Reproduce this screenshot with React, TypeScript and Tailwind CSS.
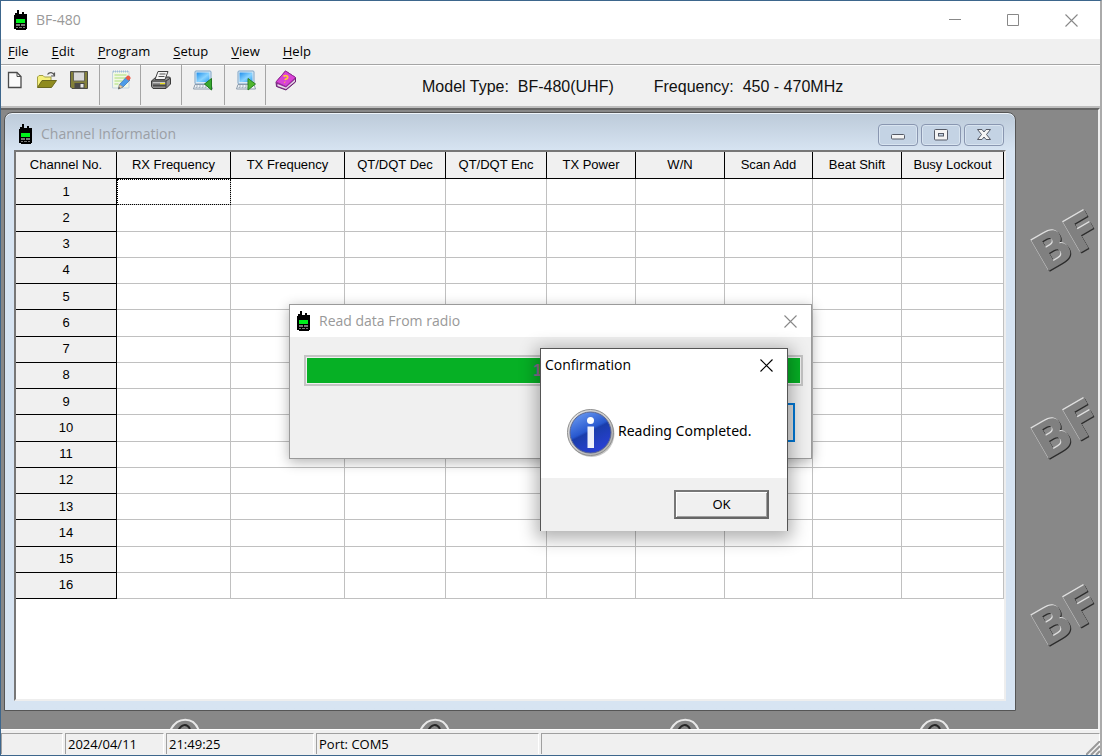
import { ReactNode, useState } from 'react';

const menus = ['File', 'Edit', 'Program', 'Setup', 'View', 'Help'];

const columns = [
  { label: 'RX Frequency', width: 'w-[114px]' },
  { label: 'TX Frequency', width: 'w-[114px]' },
  { label: 'QT/DQT Dec', width: 'w-[101px]' },
  { label: 'QT/DQT Enc', width: 'w-[101px]' },
  { label: 'TX Power', width: 'w-[89px]' },
  { label: 'W/N', width: 'w-[89px]' },
  { label: 'Scan Add', width: 'w-[88px]' },
  { label: 'Beat Shift', width: 'w-[89px]' },
  { label: 'Busy Lockout', width: 'w-[102px]' },
];

const channels = Array.from({ length: 16 }, (_, i) => i + 1);

function RadioIcon() {
  return (
    <svg width="16" height="20" viewBox="0 0 16 20" shapeRendering="crispEdges" className="shrink-0" aria-hidden="true">
      <path d="M4 0h2v4h3V2h2v2h3v15h-1v1H3v-1H1V5h1V3h2z" fill="#000" />
      <path d="M3 9h9v4H3z" fill="#00f01c" />
      <path d="M3 14h4v2H3zM8 14h4v2H8zM3 17h2v1H3zM6 17h3v1H6zM10 17h2v1h-2z" fill="#777" />
    </svg>
  );
}

function NewIcon() {
  return (
    <svg width="16" height="18" viewBox="0 0 16 18" aria-hidden="true">
      <path d="M1.5 1.5h8.500l4 4v11h-12.500z" fill="#fafafa" stroke="#4b4b4b" strokeWidth="1.300" />
      <path d="M10 1.500v4h4" fill="none" stroke="#4b4b4b" />
    </svg>
  );
}

function OpenIcon() {
  return (
    <svg width="22" height="18" viewBox="0 0 22 18" className="shrink-0" aria-hidden="true">
      <path d="M1.500 16V6l1.500-1.500h4L8.500 6h6.500v3.500" fill="#f5f07c" stroke="#a29f45" />
      <path d="M1.500 16.500 6 9.500h14.500L15.500 16.500z" fill="#8f8b1e" stroke="#6a681f" />
      <path d="M11.500 3.500c2-3 5.500-2.500 7 1M18.500 1.500v3.500h-3.500" fill="none" stroke="#555" strokeWidth="1.200" />
    </svg>
  );
}

function SaveIcon() {
  return (
    <svg width="20" height="20" viewBox="0 0 20 20" aria-hidden="true">
      <path d="M1.500 1.500h17v17H3l-1.500-1.500z" fill="#83803a" stroke="#4b4b46" />
      <path d="M4.500 2h11v9h-11z" fill="#d9d9d9" stroke="#66665a" />
      <path d="M5.500 13h10v5.500h-10z" fill="#4a4a4a" />
      <path d="M11.500 14h3v3.500h-3z" fill="#e8e8e8" />
    </svg>
  );
}

function EditIcon() {
  return (
    <svg width="20" height="20" viewBox="0 0 20 20" aria-hidden="true">
      <path d="M1.500 1.500h16.500v16.500h-16.500z" fill="#f1f8e6" stroke="#c3d3e0" />
      <path d="M2 1.500h16" stroke="#9fbdd8" strokeWidth="2" strokeDasharray="1 1" />
      <path d="M3.500 5h12M3.500 8h11M3.500 11h8M3.500 14h4" stroke="#c2e69c" strokeWidth="1.500" />
      <path d="M7.500 19l1-4.500 7-7.500 3.500 3L12 17z" fill="#4b9be8" stroke="#3f78b8" strokeWidth=".8" />
      <path d="M14.500 8l2-2.500c1.500-.5 3.500 1.500 3 3l-2 2.300z" fill="#ee5a45" />
      <path d="M7.500 19l1-4.500L12 17z" fill="#f2cf9c" stroke="#987" strokeWidth=".6" />
      <path d="M7.500 19l.4-2 1.300 1z" fill="#333" />
    </svg>
  );
}

function PrintIcon() {
  return (
    <svg width="22" height="20" viewBox="0 0 22 20" aria-hidden="true">
      <path d="M1.500 11 6 7h13.500l1 1.500v5.500L16 18.500H3L1.500 16.500z" fill="#8f8f8f" stroke="#3a3a3a" />
      <path d="M5 9.500 8 1.500h10l-3 8z" fill="#f6f6f6" stroke="#444" />
      <path d="M9.500 4h6M8.500 6.500h6" stroke="#555" />
      <path d="M1.500 11h14.500l4.500-3M16 11v7" fill="none" stroke="#3a3a3a" />
      <path d="M3 15.500h13" stroke="#4b4b4b" strokeWidth="2" />
      <path d="M10 13.500h5" stroke="#ecdf20" strokeWidth="1.500" />
      <path d="M3 12.500h12" stroke="#c6c6c6" />
    </svg>
  );
}

function ComputerIcon({ write = false }: { write?: boolean }) {
  return (
    <svg width="22" height="21" viewBox="0 0 22 21" aria-hidden="true">
      <defs>
        <linearGradient id={write ? 'screenWrite' : 'screenRead'} x1="0" y1="0" x2="1" y2="1">
          <stop offset="0" stopColor="#1f8fec" />
          <stop offset=".55" stopColor="#8ad4ff" />
          <stop offset="1" stopColor="#2c9df2" />
        </linearGradient>
      </defs>
      <rect x="3" y="1" width="16" height="13" rx="1" fill="#dfeaf4" stroke="#7ba3c6" />
      <rect x="4.500" y="2.500" width="13" height="9.500" fill={write ? 'url(#screenWrite)' : 'url(#screenRead)'} />
      <path d="M3 14.500h16l1.500 4.500H1.500z" fill="#f0f4f8" stroke="#8c9bab" />
      <path d="M4 16h11M3.500 17.500h11" stroke="#a5b2bf" strokeDasharray="2 1" />
      {write
        ? <path d="M13 8.500 20.500 14 13 20z" fill="#4fb62e" stroke="#2a8020" />
        : <path d="M19.500 8.500v11.500L12.500 14z" fill="#36a82e" stroke="#21791f" />}
    </svg>
  );
}

function HelpIcon() {
  return (
    <svg width="22" height="21" viewBox="0 0 22 21" aria-hidden="true">
      <path d="M1 12 10.500 1 20.500 7.500V12L11 20 1.500 16.500z" fill="#8d2a94" stroke="#6a2470" />
      <path d="M2.500 14 11 17.500 20 9.500v2L11 19 2.500 16z" fill="#e6dfe8" />
      <path d="M1 12 10.500 1 20.500 7.500 11 16.500z" fill="#d943d7" stroke="#9b2e9c" />
      <path d="M8.500 6.500c2-1.800 5-.5 4 1.500-.6 1-2 .8-2.500 2M9.500 12l.5.500" fill="none" stroke="#ffc83a" strokeWidth="1.800" />
    </svg>
  );
}

function InfoIcon() {
  return (
    <svg width="50" height="54" viewBox="0 -4 50 54" className="shrink-0" aria-hidden="true">
      <defs>
        <linearGradient id="infoFill" x1=".2" y1="0" x2=".7" y2="1">
          <stop offset="0" stopColor="#6b9af0" />
          <stop offset=".45" stopColor="#2858cf" />
          <stop offset=".5" stopColor="#1a3dab" />
          <stop offset="1" stopColor="#2a40d8" />
        </linearGradient>
        <linearGradient id="infoRing" x1="0" y1="0" x2="1" y2="1">
          <stop offset="0" stopColor="#e8e8e8" />
          <stop offset="1" stopColor="#a8a8a8" />
        </linearGradient>
      </defs>
      <circle cx="25.500" cy="26" r="23" fill="#c8c8c8" />
      <circle cx="24.500" cy="24.500" r="23" fill="url(#infoRing)" stroke="#8e8e8e" />
      <circle cx="24.500" cy="24.500" r="20.500" fill="url(#infoFill)" stroke="#5b6690" />
      <circle cx="24.500" cy="12.500" r="3.500" fill="#fff" />
      <path d="M21.500 18.500h6.500v21.500h-6.500z" fill="#eef0fa" />
    </svg>
  );
}

function CloseGlyph() {
  return (
    <svg width="13" height="13" viewBox="0 0 13 13" aria-hidden="true">
      <path d="M.5.5l12 12M12.500.500l-12 12" stroke="currentColor" strokeWidth="1.100" />
    </svg>
  );
}

function Watermark() {
  const marks = [163, 351, 538];
  const tops = [184, 434, 684, 934];
  return (
    <svg className="absolute inset-0 size-full" aria-hidden="true">
      {marks.map((y) => (
        <g key={y} className="[filter:drop-shadow(-1px_-1px_0_#dedede)_drop-shadow(1px_1px_0_#2c2c2c)]">
          <text
            transform={`translate(1044 ${y}) rotate(-30)`}
            fontFamily="DejaVu Sans, sans-serif"
            fontWeight="700"
            fontSize="48"
            fill="#808080"
          >
            BF
          </text>
        </g>
      ))}
      {tops.map((x) => (
        <g key={x} transform={`translate(${x} 609)`} fill="none">
          <path d="M-16 13C-8-3 9-3 15 13z" fill="#858585" />
          <path d="M-15 12C-8-3 9-3 14 12" stroke="#e8e8e8" strokeWidth="2" />
          <path d="M-7 12C-4 5 2 4 5 10" stroke="#262626" strokeWidth="2" />
        </g>
      ))}
    </svg>
  );
}

function ToolGroup({ children, className }: { children: ReactNode; className: string }) {
  return <div className={`flex h-10 items-start border-r border-[#a5a5a5] pt-px ${className}`}>{children}</div>;
}

function ToolButton({ label, children }: { label: string; children: ReactNode }) {
  return <button aria-label={label} title={label} className="flex h-7 w-6 items-center justify-center">{children}</button>;
}

function ChildButton({ label, children }: { label: string; children: ReactNode }) {
  return (
    <button aria-label={label} className="flex h-[22px] w-10 items-center justify-center rounded-sm border border-[#8996b0] bg-[#c4d3e4] shadow-[inset_0_0_0_1px_#d8e4f0]">
      <svg width="16" height="14" viewBox="0 0 16 14" aria-hidden="true">{children}</svg>
    </button>
  );
}

function ChannelTable() {
  return (
    <table className="h-[447px] w-[988px] table-fixed border-separate border-spacing-0 text-[13px] leading-4 text-black">
      <thead>
        <tr className="h-[27px] bg-[#f0f0f0]">
          <th scope="col" className="w-[101px] border-r border-b border-black p-0 font-normal">Channel No.</th>
          {columns.map((col) => (
            <th key={col.label} scope="col" className={`border-r border-b border-black p-0 font-normal ${col.width}`}>{col.label}</th>
          ))}
        </tr>
      </thead>
      <tbody>
        {channels.map((n) => (
          <tr key={n}>
            <th scope="row" className="border-r border-b border-black bg-[#f0f0f0] p-0 font-normal">{n}</th>
            {columns.map((col, i) => (
              <td
                key={col.label}
                className={`border-r border-b border-[#c0c0c0] p-0 ${n === 1 && i === 0 ? 'outline-1 -outline-offset-1 outline-dotted outline-black' : ''}`}
              />
            ))}
          </tr>
        ))}
      </tbody>
    </table>
  );
}

function ChannelWindow() {
  return (
    <section className="absolute top-[2px] left-[3px] flex h-[599px] w-[1012px] flex-col rounded-t-lg border border-[#555] bg-[#d7e4f2] bg-linear-to-b from-[#bccad9] to-[#d7e4f2] to-[38px] px-[9px] pb-[9px] shadow-[inset_0_1px_0_#eef4fa]">
      <header className="flex h-[37px] items-end">
        <div className="flex h-8 flex-1 items-center gap-[7px] pl-1">
          <RadioIcon />
          <h2 className="font-['Open_Sans','Noto_Sans',sans-serif] text-sm text-[#9b9fa5]">Channel Information</h2>
        </div>
        <div className="flex gap-[3px] pr-[2px] pb-1">
          <ChildButton label="Minimize">
            <rect x="1.500" y="6.500" width="13" height="4.500" rx="1" fill="#f4f4f4" stroke="#555a66" />
          </ChildButton>
          <ChildButton label="Restore">
            <rect x="1.500" y="1.500" width="13" height="10.500" rx="1" fill="#f4f4f4" stroke="#555a66" />
            <rect x="5.500" y="5.500" width="5" height="2.500" fill="#c4d3e4" stroke="#555a66" />
          </ChildButton>
          <ChildButton label="Close">
            <path d="M1.500 1.500h4.500l2 2.500 2-2.500h4.500L10.500 6.500l4 5H10L8 9l-2 2.500H1.500l4-5z" fill="#f4f4f4" stroke="#555a66" />
          </ChildButton>
        </div>
      </header>
      <div className="flex-1 overflow-hidden border-t-2 border-r-2 border-b-2 border-l-2 border-t-[#777] border-r-[#eee] border-b-[#eee] border-l-[#777] bg-white">
        <ChannelTable />
      </div>
    </section>
  );
}

function ProgressDialog() {
  return (
    <section role="dialog" aria-label="Read data From radio" className="absolute top-[194px] left-[288px] h-[155px] w-[523px] border border-[#9a9a9a] bg-[#f0f0f0] shadow-[0_3px_12px_rgba(0,0,0,0.3)]">
      <header className="flex h-8 items-center gap-[7px] bg-white pr-[14px] pl-[6px]">
        <RadioIcon />
        <h2 className="flex-1 font-['Open_Sans','Noto_Sans',sans-serif] text-sm text-[#999]">Read data From radio</h2>
        <button aria-label="Close" className="text-[#888]"><CloseGlyph /></button>
      </header>
      <div className="flex flex-col items-end gap-[17px] pt-[18px] pr-2 pl-[14px]">
        <div role="progressbar" aria-label="Reading" aria-valuenow={100} className="flex h-[31px] w-full border-2 border-[#c4c4c4] bg-[#f0f0f0] p-px">
          <div className="flex h-full w-full items-center justify-center bg-[#06b025] text-base font-bold text-[#8a6a90]">100%</div>
        </div>
        <button aria-label="Close" className="mr-2 h-[39px] w-24 border-2 border-[#0078d7] bg-[#e1e1e1]" />
      </div>
    </section>
  );
}

function ConfirmDialog({ onClose }: { onClose: () => void }) {
  return (
    <section role="dialog" aria-label="Confirmation" className="absolute top-[238px] left-[539px] flex h-[183px] w-[248px] flex-col border border-b-0 border-[#555] bg-white font-['Open_Sans','Noto_Sans',sans-serif] text-black shadow-[0_4px_16px_4px_rgba(0,0,0,0.3)]">
      <header className="flex h-8 items-center pr-[14px] pl-1">
        <h2 className="flex-1 text-sm">Confirmation</h2>
        <button aria-label="Close" onClick={onClose}><CloseGlyph /></button>
      </header>
      <div className="flex flex-1 items-center gap-[2px] pt-[2px] pl-[25px]">
        <InfoIcon />
        <p className="font-['Noto_Sans',sans-serif] text-sm">Reading Completed.</p>
      </div>
      <footer className="flex h-[53px] items-start justify-end bg-[#f0f0f0] pt-3 pr-[18px]">
        <button
          onClick={onClose}
          className="h-[29px] w-[95px] border-2 border-t-[#777] border-r-[#666] border-b-[#666] border-l-[#777] bg-[#f0f0f0] font-['Noto_Sans',sans-serif] text-[13px] shadow-[inset_1px_1px_0_#fff,inset_-1px_-1px_0_#a0a0a0]"
        >
          OK
        </button>
      </footer>
    </section>
  );
}

function StatusCell({ children, className }: { children?: ReactNode; className: string }) {
  return <div className={`h-[21px] border-t border-r border-l border-[#a0a0a0] border-r-white pl-[2px] leading-5 ${className}`}>{children}</div>;
}

export default function App() {
  const [confirming, setConfirming] = useState(true);

  return (
    <div className="flex min-h-screen flex-col overflow-hidden border border-r-2 border-[#3d668c] border-r-[#aaa] bg-[#f0f0f0] font-['Liberation_Sans',Arial,sans-serif]">
      <header className="flex h-[38px] shrink-0 items-center gap-[7px] bg-white pl-3">
        <RadioIcon />
        <h1 className="flex-1 font-['Open_Sans','Noto_Sans',sans-serif] text-sm text-[#999]">BF-480</h1>
        <div className="flex text-[#888]">
          <button aria-label="Minimize" className="flex h-9 w-[58px] items-center justify-center">
            <svg width="12" height="12" aria-hidden="true"><path d="M0 5.500h12" stroke="currentColor" /></svg>
          </button>
          <button aria-label="Maximize" className="flex h-9 w-[58px] items-center justify-center">
            <svg width="12" height="12" aria-hidden="true"><path d="M.5.5h11v11H.5z" fill="none" stroke="currentColor" /></svg>
          </button>
          <button aria-label="Close" className="flex h-9 w-[58px] items-center justify-center"><CloseGlyph /></button>
        </div>
      </header>

      <nav className="flex h-[25px] shrink-0 items-center gap-[23px] pl-[7px] font-['Open_Sans','Noto_Sans',sans-serif] text-[13px] text-black">
        {menus.map((name) => (
          <button key={name}><span className="underline underline-offset-2">{name[0]}</span>{name.slice(1)}</button>
        ))}
      </nav>

      <div className="flex h-[44px] shrink-0 items-start border-t border-b-2 border-t-[#a5a5a5] border-b-[#bdbdbd] shadow-[inset_0_1px_0_#fff]">
        <ToolGroup className="w-[99px] gap-2 pl-[2px]">
          <ToolButton label="New"><NewIcon /></ToolButton>
          <ToolButton label="Open"><OpenIcon /></ToolButton>
          <ToolButton label="Save"><SaveIcon /></ToolButton>
        </ToolGroup>
        <ToolGroup className="w-[41px] pl-[9px]"><ToolButton label="Edit"><EditIcon /></ToolButton></ToolGroup>
        <ToolGroup className="w-[41px] pl-2"><ToolButton label="Print"><PrintIcon /></ToolButton></ToolGroup>
        <ToolGroup className="w-[43px] pl-[9px]"><ToolButton label="Read from radio"><ComputerIcon /></ToolButton></ToolGroup>
        <ToolGroup className="w-[41px] pl-[9px]"><ToolButton label="Write to radio"><ComputerIcon write /></ToolButton></ToolGroup>
        <div className="pt-px pl-2"><ToolButton label="Help"><HelpIcon /></ToolButton></div>
        <p className="flex gap-10 pt-[10px] pl-[124px] text-base text-[#111]">
          <span className="whitespace-pre">Model Type:  BF-480(UHF)</span>
          <span className="whitespace-pre">Frequency:  450 - 470MHz</span>
        </p>
      </div>

      <main className="relative min-h-[620px] flex-1 overflow-hidden border-t-2 border-r-2 border-b border-t-[#666] border-r-[#eee] border-b-white bg-[#888]">
        <Watermark />
        <ChannelWindow />
        <ProgressDialog />
        {confirming && <ConfirmDialog onClose={() => setConfirming(false)} />}
      </main>

      <footer className="relative flex h-[25px] shrink-0 items-end gap-[2px] pb-px font-['Open_Sans','Noto_Sans',sans-serif] text-[13px] text-black">
        <StatusCell className="w-[62px]" />
        <StatusCell className="w-[99px]">2024/04/11</StatusCell>
        <StatusCell className="w-[148px]">21:49:25</StatusCell>
        <StatusCell className="w-[223px]">Port: COM5</StatusCell>
        <StatusCell className="flex-1" />
        <svg width="14" height="14" className="absolute right-0 bottom-0" aria-hidden="true">
          <path d="M0 14L14 0M5 14l9-9M10 14l4-4" stroke="#999" strokeWidth="2" />
        </svg>
      </footer>
    </div>
  );
}
